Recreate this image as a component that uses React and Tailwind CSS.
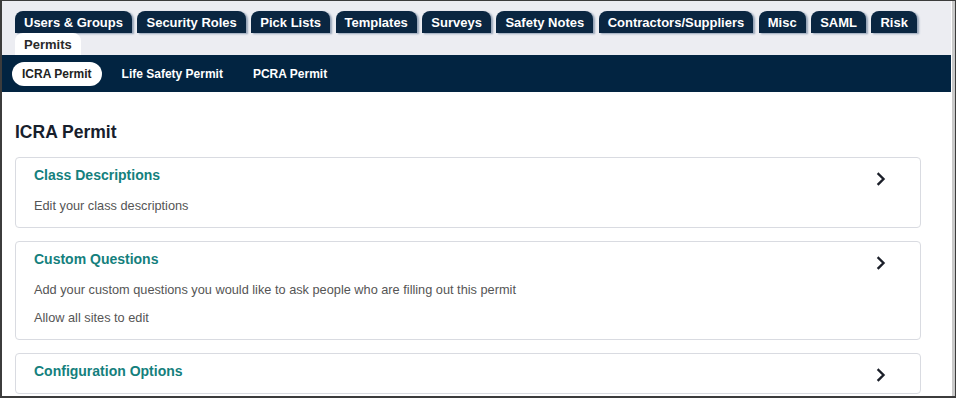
import React from "react";

const topTabs = [
  "Users & Groups",
  "Security Roles",
  "Pick Lists",
  "Templates",
  "Surveys",
  "Safety Notes",
  "Contractors/Suppliers",
  "Misc",
  "SAML",
  "Risk",
];

const subTabs = ["ICRA Permit", "Life Safety Permit", "PCRA Permit"];

const cards = [
  { title: "Class Descriptions", lines: ["Edit your class descriptions"] },
  {
    title: "Custom Questions",
    lines: [
      "Add your custom questions you would like to ask people who are filling out this permit",
      "Allow all sites to edit",
    ],
  },
  { title: "Configuration Options", lines: [] },
];

const Chevron = () => (
  <svg width="10" height="14" viewBox="0 0 10 14" className="shrink-0">
    <polyline
      points="2.5,2 7.5,7 2.5,12"
      fill="none"
      stroke="#1b1f29"
      strokeWidth="2.4"
      strokeLinecap="square"
    />
  </svg>
);

const Tab = ({ label, active }) => (
  <div
    className={`h-[22px] px-[9px] flex items-center rounded-t-[8px] text-[13px] font-bold leading-none ${
      active
        ? "bg-white text-[#2a2a2a]"
        : "bg-[#0a2641] text-white shadow-[2px_1px_2px_rgba(40,70,110,0.45)]"
    }`}
  >
    {label}
  </div>
);

const App = () => {
  return (
    <div
      className="w-[956px] h-[398px] bg-[#3c3c3c] pl-[2px] pt-[1px] pb-[2px] pr-[1px] flex overflow-hidden"
      style={{ fontFamily: '"Liberation Sans", Arial, sans-serif' }}
    >
      <div className="flex-1 flex flex-col bg-white min-w-0">
        {/* Top tabs */}
        <div className="bg-[#ecedf2] pl-[13px] pt-[10px]">
          <div className="flex gap-[5.5px]">
            {topTabs.map((t) => (
              <Tab key={t} label={t} />
            ))}
          </div>
          <div className="flex">
            <Tab label="Permits" active />
          </div>
        </div>

        {/* Sub nav */}
        <div className="bg-[#022441] h-[37px] pl-[10px] flex items-center gap-[10px]">
          {subTabs.map((t, i) => (
            <div
              key={t}
              className={`h-[24px] px-[10px] flex items-center rounded-full text-[12px] font-bold ${
                i === 0 ? "bg-white text-[#222]" : "text-white"
              }`}
            >
              {t}
            </div>
          ))}
        </div>

        {/* Content */}
        <div className="flex-1 pt-[30px] pl-[13px] pr-[30px]">
          <h1 className="text-[17.5px] leading-[20px] font-bold text-[#17202c] mb-[15px]">
            ICRA Permit
          </h1>
          <div className="flex flex-col gap-[13px]">
            {cards.map((c) => (
              <div
                key={c.title}
                className="border border-[#d9dbe1] rounded-[4px] pl-[18px] pr-[34px] pt-[7px] pb-[11px] flex"
              >
                <div className="flex-1">
                  <div className="text-[14px] leading-[20px] font-bold text-[#14807d]">
                    {c.title}
                  </div>
                  {c.lines.length > 0 && (
                    <div className="mt-[11px] flex flex-col gap-[8px]">
                      {c.lines.map((l) => (
                        <div
                          key={l}
                          className="text-[12.75px] leading-[20px] text-[#555]"
                        >
                          {l}
                        </div>
                      ))}
                    </div>
                  )}
                </div>
                <div className="pt-[7px]">
                  <Chevron />
                </div>
              </div>
            ))}
          </div>
        </div>
      </div>
      <div className="w-[1px] bg-white" />
      <div className="w-[3px] bg-[#c9c9c9]" />
    </div>
  );
};

export default App;
